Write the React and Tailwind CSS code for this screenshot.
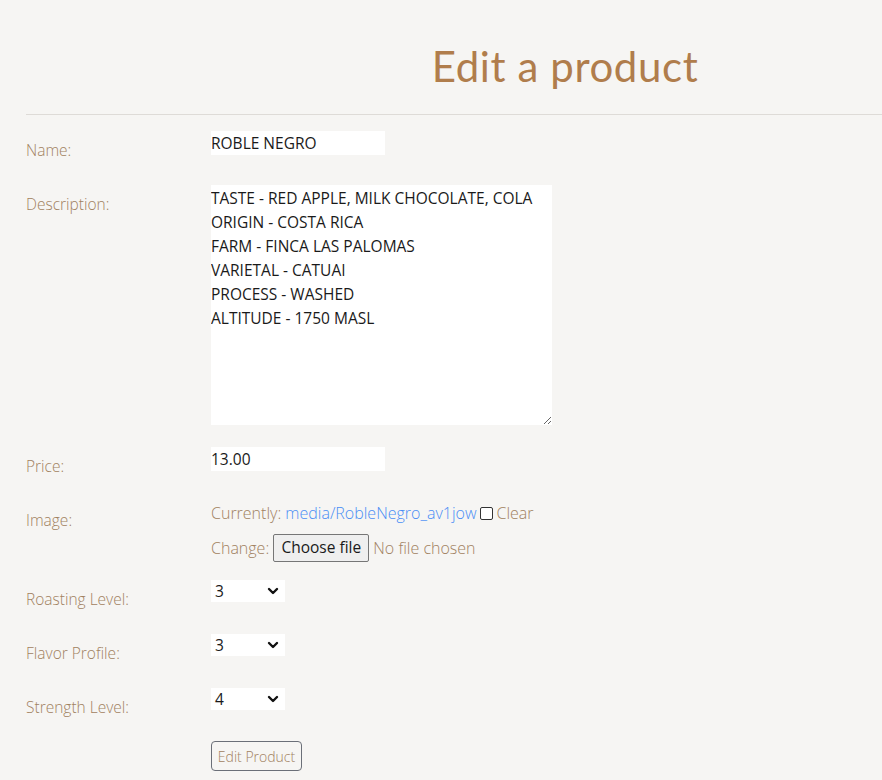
import React from "react";

const labelCls = "w-[185px] shrink-0 pt-[7px] leading-6 font-light text-[#a1815f]";
const font = { fontFamily: '"Open Sans", "Noto Sans", sans-serif' };

function Chevron() {
  return (
    <svg className="pointer-events-none absolute right-[6px] top-[7px]" width="12" height="8" viewBox="0 0 12 8">
      <path d="M2 2 L6 6 L10 2" fill="none" stroke="#111" strokeWidth="2.4" strokeLinecap="round" strokeLinejoin="round" />
    </svg>
  );
}

function Select({ value }) {
  return (
    <div className="relative h-[22px] w-[74px] bg-white">
      <span className="block pl-[4px] leading-[22px] text-[#1a1a1a]">{value}</span>
      <Chevron />
    </div>
  );
}

export default function App() {
  return (
    <div className="min-h-[780px] w-full bg-[#f6f5f3] text-[15.5px]" style={font}>
      <div className="ml-[248px] pt-[40px] text-center">
        <h1
          className="text-[42px] leading-[52px] text-[#b07d4c]"
          style={{ fontFamily: 'Lato, "Noto Sans", sans-serif', letterSpacing: "0.6px" }}
        >
          Edit a product
        </h1>
      </div>
      <div className="ml-[26px] mt-[22px] border-t border-[#dedbd7]" />
      <form className="flex flex-col pl-[26px]">
        <div className="mt-[16px] flex items-start">
          <div className={labelCls}>Name:</div>
          <div className="h-[24px] w-[174px] bg-white leading-6 text-[#1a1a1a]">ROBLE NEGRO</div>
        </div>
        <div className="mt-[23px] flex items-start">
          <div className={labelCls}>Description:</div>
          <textarea
            readOnly
            className="block h-[240px] w-[341px] resize bg-white p-0 pt-[1px] leading-6 text-[#1a1a1a] outline-none"
            defaultValue={
              "TASTE - RED APPLE, MILK CHOCOLATE, COLA\nORIGIN - COSTA RICA\nFARM - FINCA LAS PALOMAS\nVARIETAL - CATUAI\nPROCESS - WASHED\nALTITUDE - 1750 MASL"
            }
          />
        </div>
        <div className="mt-[22px] flex items-start">
          <div className={labelCls}>Price:</div>
          <div className="h-[24px] w-[174px] bg-white leading-6 text-[#1a1a1a]">13.00</div>
        </div>
        <div className="mt-[23px] flex items-start">
          <div className={labelCls}>Image:</div>
          <div className="flex flex-col text-[16px] font-light text-[#a1815f]">
            <div className="flex h-[24px] items-center leading-6">
              <span>Currently:&nbsp;</span>
              <span className="text-[#4a8ef5]">media/RobleNegro_av1jow</span>
              <span className="ml-[3px] mr-[4px] inline-block h-[13px] w-[13px] rounded-[2px] border border-[#333] bg-white" />
              <span>Clear</span>
            </div>
            <div className="mt-[9px] flex h-[28px] items-center">
              <span>Change:&nbsp;</span>
              <span className="flex h-[28px] items-center rounded-[2px] border border-[#767676] bg-[#efefef] px-[7px] text-[15.5px] font-normal text-[#1a1a1a]">
                Choose file
              </span>
              <span>&nbsp;No file chosen</span>
            </div>
          </div>
        </div>
        <div className="mt-[18px] flex items-start">
          <div className={labelCls}>Roasting Level:</div>
          <Select value="3" />
        </div>
        <div className="mt-[23px] flex items-start">
          <div className={labelCls}>Flavor Profile:</div>
          <Select value="3" />
        </div>
        <div className="mt-[23px] flex items-start">
          <div className={labelCls}>Strength Level:</div>
          <Select value="4" />
        </div>
        <div className="mt-[22px] flex">
          <div className="w-[185px] shrink-0" />
          <button
            type="button"
            className="flex h-[30px] w-[91px] items-center justify-center rounded-[4px] border border-[#6b6f78] text-[14px] font-light text-[#a1815f]"
          >
            Edit Product
          </button>
        </div>
      </form>
    </div>
  );
}
